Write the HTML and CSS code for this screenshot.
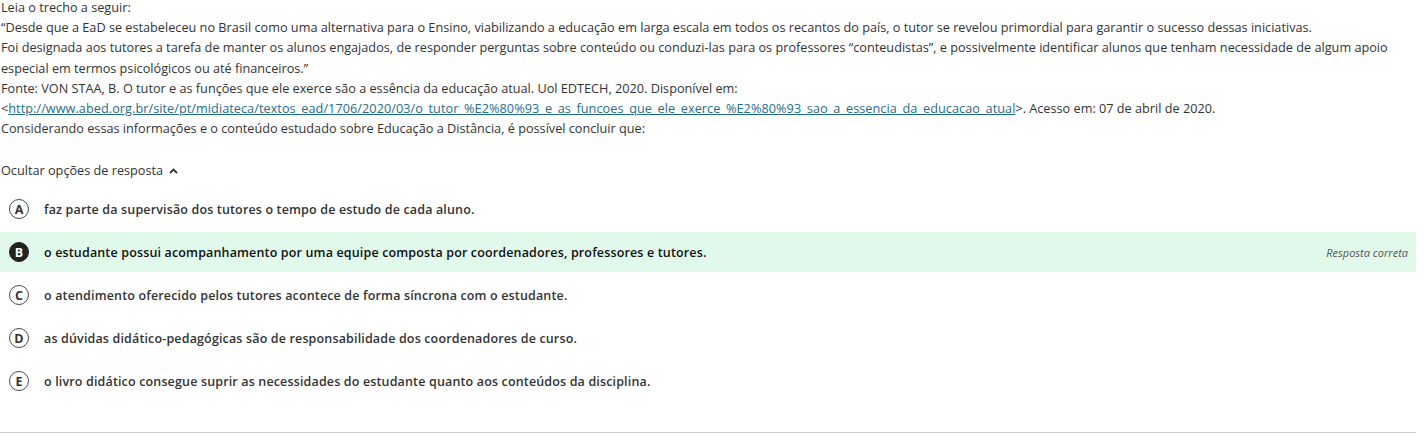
FILE: index.html
```html
<!DOCTYPE html>
<html lang="pt">
<head>
<meta charset="utf-8">
<link rel="stylesheet" href="styles.css">
</head>
<body>
<div class="page">
  <div class="question">
    <p>Leia o trecho a seguir:</p>
    <p>“Desde que a EaD se estabeleceu no Brasil como uma alternativa para o Ensino, viabilizando a educação em larga escala em todos os recantos do país, o tutor se revelou primordial para garantir o sucesso dessas iniciativas.</p>
    <p>Foi designada aos tutores a tarefa de manter os alunos engajados, de responder perguntas sobre conteúdo ou conduzi-las para os professores “conteudistas”, e possivelmente identificar alunos que tenham necessidade de algum apoio especial em termos psicológicos ou até financeiros.”</p>
    <p>Fonte: VON STAA, B. O tutor e as funções que ele exerce são a essência da educação atual. Uol EDTECH, 2020. Disponível em:</p>
    <p>&lt;<a href="#">http://www.abed.org.br/site/pt/midiateca/textos_ead/1706/2020/03/o_tutor_%E2%80%93_e_as_funcoes_que_ele_exerce_%E2%80%93_sao_a_essencia_da_educacao_atual</a>&gt;. Acesso em: 07 de abril de 2020.</p>
    <p>Considerando essas informações e o conteúdo estudado sobre Educação a Distância, é possível concluir que:</p>
  </div>
  <div class="toggle">Ocultar opções de resposta
    <svg class="chev" width="9" height="6" viewBox="0 0 9 6"><path d="M1 5 L4.5 1.5 L8 5" fill="none" stroke="#333" stroke-width="1.8"/></svg>
  </div>
  <ul class="options">
    <li class="opt"><span class="letter">A</span><span class="txt">faz parte da supervisão dos tutores o tempo de estudo de cada aluno.</span></li>
    <li class="opt correct"><span class="letter">B</span><span class="txt">o estudante possui acompanhamento por uma equipe composta por coordenadores, professores e tutores.</span><span class="tag">Resposta correta</span></li>
    <li class="opt"><span class="letter">C</span><span class="txt">o atendimento oferecido pelos tutores acontece de forma síncrona com o estudante.</span></li>
    <li class="opt"><span class="letter">D</span><span class="txt">as dúvidas didático-pedagógicas são de responsabilidade dos coordenadores de curso.</span></li>
    <li class="opt"><span class="letter">E</span><span class="txt">o livro didático consegue suprir as necessidades do estudante quanto aos conteúdos da disciplina.</span></li>
  </ul>
  <div class="rule"></div>
</div>
</body>
</html>
```
FILE: styles.css
```css
html, body {
  margin: 0;
  padding: 0;
  background: #fff;
}
body {
  font-family: "Open Sans", "Liberation Sans", sans-serif;
  color: #333;
  overflow: hidden;
}
.page {
  width: 1416px;
  margin-top: -3px;
}
.question {
  font-size: 12.7px;
  line-height: 20.2px;
  padding-left: 1px;
}
.question p {
  margin: 0;
}
.question a {
  color: #1f6d8c;
  text-decoration: underline;
  letter-spacing: 0.05px;
}
.toggle {
  margin-top: 22px;
  font-size: 12.7px;
  line-height: 20px;
  padding-left: 1px;
  display: flex;
  align-items: center;
  gap: 6px;
}
.chev {
  display: block;
  margin-top: 2px;
}
.options {
  list-style: none;
  margin: 9px 0 0 0;
  padding: 0;
}
.opt {
  display: flex;
  align-items: center;
  height: 40px;
  margin-bottom: 3px;
  padding-left: 9px;
  font-size: 12.5px;
  font-weight: 600;
  color: #333;
}
.letter {
  flex: none;
  box-sizing: border-box;
  width: 20px;
  height: 20px;
  border: 1.5px solid #4a4a4a;
  border-radius: 50%;
  display: flex;
  align-items: center;
  justify-content: center;
  font-size: 12.5px;
  font-weight: 700;
  color: #333;
  margin-right: 15px;
}
.correct {
  background: #e1f9ea;
}
.correct .letter {
  background: #222;
  border-color: #222;
  color: #fff;
}
.correct .txt {
  color: #111;
}
.txt {
  flex: 1;
  letter-spacing: 0.15px;
}
.tag {
  font-style: italic;
  font-weight: 400;
  font-size: 11px;
  color: #555;
  margin-right: 8px;
}
.rule {
  margin-top: 31px;
  height: 1px;
  background: #ccc;
}
```
